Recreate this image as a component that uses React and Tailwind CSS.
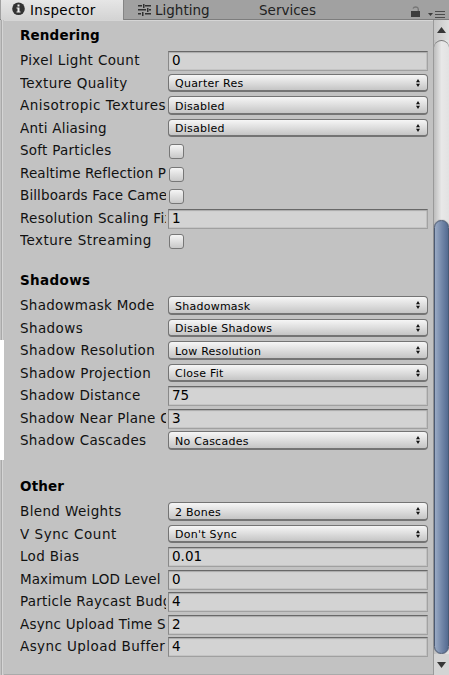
import React from "react";

const sections = [
  {
    title: "Rendering",
    head: "h-[30px] tracking-[0.15px]",
    rows: [
      ["Pixel Light Count", "field", "0", "tracking-[0.37px]"],
      ["Texture Quality", "popup", "Quarter Res", "tracking-[0.37px]"],
      ["Anisotropic Textures", "popup", "Disabled", "tracking-[0.5px]"],
      ["Anti Aliasing", "popup", "Disabled", "tracking-[0.22px]"],
      ["Soft Particles", "check", "", "tracking-[0.26px]"],
      ["Realtime Reflection P", "check", "", "tracking-[0.12px]"],
      ["Billboards Face Came", "check", "", "tracking-[0.12px]"],
      ["Resolution Scaling Fix", "field", "1", "tracking-[0.28px]"],
      ["Texture Streaming", "check", "", "tracking-[0.5px]"],
    ],
  },
  {
    title: "Shadows",
    head: "h-[42px] tracking-[0.35px]",
    rows: [
      ["Shadowmask Mode", "popup", "Shadowmask", "tracking-[0.26px]"],
      ["Shadows", "popup", "Disable Shadows", "tracking-[0.4px]"],
      ["Shadow Resolution", "popup", "Low Resolution", "tracking-[0.42px]"],
      ["Shadow Projection", "popup", "Close Fit", "tracking-[0.4px]"],
      ["Shadow Distance", "field", "75", "tracking-[0.27px]"],
      ["Shadow Near Plane O", "field", "3", "tracking-[0.27px]"],
      ["Shadow Cascades", "popup", "No Cascades", "tracking-[0.3px]"],
    ],
  },
  {
    title: "Other",
    head: "h-[48px] tracking-[0.15px]",
    rows: [
      ["Blend Weights", "popup", "2 Bones", "tracking-[0.37px]"],
      ["V Sync Count", "popup", "Don't Sync", "tracking-[0.53px]"],
      ["Lod Bias", "field", "0.01", "tracking-[0.33px]"],
      ["Maximum LOD Level", "field", "0", "tracking-[0.1px]"],
      ["Particle Raycast Budg", "field", "4", "tracking-[0.23px]"],
      ["Async Upload Time S", "field", "2", "tracking-[0.2px]"],
      ["Async Upload Buffer", "field", "4", "tracking-[0.42px]"],
    ],
  },
];

function Popup({ value, tall }) {
  return (
    <div
      className={`${tall ? "h-[19px]" : "h-[18px]"} flex w-[260px] items-center justify-between rounded-[4px] border border-b-2 border-[#747474] bg-linear-to-b from-[#f6f6f6] via-[#dedede] to-[#c5c5c5] pr-[7px] pl-[6px]`}
    >
      <span className="mt-[3px] text-[11px] leading-[14px] tracking-[0.25px]">{value}</span>
      <svg width="4" height="8" viewBox="0 0 4 8" fill="#111">
        <path d="M2 0 4 3.3H0zM0 4.7h4L2 8z" />
      </svg>
    </div>
  );
}

function Field({ value }) {
  return (
    <div className="h-5 w-[260px] border border-t-[#686868] border-r-[#a2a2a2] border-b-[#a0a0a0] border-l-[#898989] bg-[#d3d3d3] pl-[3px] text-[13.5px] leading-[17px] shadow-[inset_0_1px_1px_#aaa,inset_-1px_-1px_0_#c4c4c4]">
      {value}
    </div>
  );
}

function Checkbox() {
  return (
    <div className="mt-[3px] ml-[1px] h-[15px] w-[15px] rounded-[3px] border border-[#777] bg-linear-to-b from-[#f5f5f5] to-[#c9c9c9]" />
  );
}

function Row({ row, index }) {
  const [label, kind, value, spacing] = row;
  const even = index % 2 === 0;
  return (
    <div className={`${even ? "h-[23px]" : "h-[22px]"} flex shrink-0 items-start`}>
      <div
        className={`${spacing} w-[146px] shrink-0 overflow-hidden text-[13.5px] leading-[18px] whitespace-nowrap text-[#111]`}
      >
        {label}
      </div>
      <div className="ml-[2px]">
        {kind === "field" && <Field value={value} />}
        {kind === "popup" && <Popup value={value} tall={even} />}
        {kind === "check" && <Checkbox />}
      </div>
    </div>
  );
}

function Tabs() {
  return (
    <div className="flex h-[20px] shrink-0 border-b border-[#7d7d7d] bg-[#a1a1a1] pl-[1px] text-[13.5px] leading-[20px] text-[#222]">
      <div className="flex h-[20px] w-[123px] items-start border-r border-[#858585] bg-linear-to-b from-[#e6e6e6] to-[#d3d3d3] pl-[11px] text-black">
        <svg className="mt-[2px]" width="13" height="14" viewBox="0 0 13 14">
          <circle cx="6.5" cy="6.8" r="6.3" fill="#333" />
          <path d="M5.5 2.5h2v2h-2zM4.5 5.5h3v4h1v1h-4v-1h1v-3h-1z" fill="#eee" />
        </svg>
        <span className="ml-[5px] tracking-[0.3px]">Inspector</span>
      </div>
      <div className="flex w-[135px] pl-[14px]">
        <svg className="mt-[4px]" width="13" height="12" viewBox="0 0 13 12" fill="#303030">
          <path d="M0 1h4v1.6H0zM5 0h1.5v4H5zM7 1h6v1.6H7zM0 5h8v1.6H0zM9 4h1.5v4H9zM11 5h2v1.6h-2zM0 9h3v1.6H0zM4 8h1.5v4H4zM7 9h6v1.6H7z" />
        </svg>
        <span className="ml-[4px]">Lighting</span>
      </div>
      <span>Services</span>
      <svg className="mt-[6px] ml-auto" width="38" height="13" viewBox="0 0 38 13">
        <path d="M0 5h9v6H0z" fill="#3d3d3d" />
        <path d="M2 2.5C3 .5 7 .5 7.3 3v2" fill="none" stroke="#777" strokeWidth="1.4" />
        <path d="M17 7h5l-2.5 3z" fill="#3d3d3d" />
        <path d="M24 5.5h10M24 8.5h10M24 11.5h10" stroke="#4c4c4c" />
      </svg>
    </div>
  );
}

function Scrollbar() {
  return (
    <div className="flex w-[16px] shrink-0 flex-col border-l border-[#999] bg-linear-to-r from-[#bdbdbd] via-[#e8e8e8] to-[#e2e2e2]">
      <div className="flex h-[20px] shrink-0 justify-center bg-linear-to-r from-[#c5c5c5] to-[#dedede] pt-[7px]">
        <svg width="9" height="6" viewBox="0 0 9 6">
          <path d="M4.5 0 9 6H0z" fill="#363636" />
        </svg>
      </div>
      <div className="h-[180px] shrink-0 rounded-t-[8px] border-t border-[#777]" />
      <div className="h-[434px] shrink-0 rounded-[8px] border border-[#4b5a73] bg-linear-to-r from-[#9aaac4] via-[#7589aa] to-[#546b91] shadow-[0_0_1px_#445]" />
      <div className="flex grow justify-center bg-[#d4d4d4] pt-[8px]">
        <svg width="9" height="6" viewBox="0 0 9 6">
          <path d="M0 0h9L4.5 6z" fill="#363636" />
        </svg>
      </div>
    </div>
  );
}

export default function App() {
  return (
    <div className="flex h-[675px] w-[449px] flex-col overflow-hidden bg-[#c2c2c2] font-['DejaVu_Sans',sans-serif] text-black">
      <Tabs />
      <div className="flex h-[655px]">
        <div className="flex w-[4px] shrink-0 flex-col">
          <div className="ml-[1px] h-[320px] w-[2px] border-l border-[#a9a9a9] bg-[#d5d5d5]" />
          <div className="h-[120px] bg-white" />
          <div className="ml-[1px] grow border-l border-[#a9a9a9]">
            <div className="h-full w-[1px] bg-[#d5d5d5]" />
          </div>
        </div>
        <div className="flex w-[429px] shrink-0 flex-col border-t border-b border-t-[#d5d5d5] border-b-[#aaa] pl-[16px]">
          {sections.map((s) => (
            <section key={s.title} className="flex flex-col">
              <h2 className={`${s.head} flex shrink-0 flex-col justify-end text-[13.5px] leading-[18px] font-bold`}>
                <span className="mb-[7px]">{s.title}</span>
              </h2>
              {s.rows.map((row, i) => (
                <Row key={row[0]} row={row} index={i} />
              ))}
            </section>
          ))}
        </div>
        <Scrollbar />
      </div>
    </div>
  );
}
